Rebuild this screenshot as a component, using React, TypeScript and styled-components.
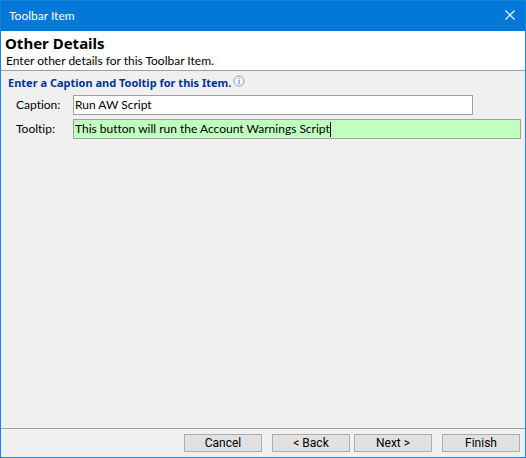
import React, { useState } from "react";
import styled, { createGlobalStyle } from "styled-components";

const GlobalStyle = createGlobalStyle`
  * { box-sizing: border-box; }
  body {
    margin: 0;
    font-family: Lato, "Open Sans", sans-serif;
    font-size: 12px;
    line-height: 16px;
    font-variant-ligatures: none;
    color: #000;
  }
`;

const Dialog = styled.main`
  display: flex;
  flex-direction: column;
  min-height: 100vh;
  background: #f0f0f0;
  border: 1px solid #1883d7;
`;

const TitleBar = styled.header`
  display: flex;
  align-items: center;
  justify-content: space-between;
  height: 30px;
  padding: 0 8px;
  background: #0078d7;
  color: #fff;
`;

const CloseButton = styled.button`
  display: flex;
  padding: 0 2px 2px;
  border: 0;
  background: transparent;
  color: inherit;
`;

const Intro = styled.section`
  height: 40px;
  padding: 3px 4px 0;
  background: #fff;
  border-bottom: 1px solid #a0a0a0;
`;

const Title = styled.h1`
  margin: 0;
  font-family: "Noto Sans", "Open Sans", sans-serif;
  font-size: 15px;
  line-height: 19px;
  font-weight: 700;
`;

const Description = styled.p`
  margin: 0 1px;
`;

const Form = styled.form`
  flex: 1;
  display: flex;
  flex-direction: column;
  gap: 4px;
  padding: 4px 4px 0 7px;
`;

const SectionTitle = styled.h2`
  display: flex;
  gap: 2px;
  margin: 0;
  font-family: "Noto Sans", "Open Sans", sans-serif;
  font-size: 11px;
  line-height: 16px;
  font-weight: 700;
  color: #003399;
`;

const Row = styled.div`
  display: grid;
  grid-template-columns: 57px 1fr;
  align-items: center;
  padding-left: 8px;
`;

const Field = styled.div<{ $active?: boolean }>`
  display: flex;
  align-items: center;
  height: 20px;
  margin-right: ${(p) => (p.$active ? "0" : "48px")};
  padding-left: 1px;
  overflow: hidden;
  border: 1px solid #a0a0a0;
  background: ${(p) => (p.$active ? "#c0ffc0" : "#fff")};
`;

const TextInput = styled.input<{ $fit?: boolean }>`
  ${(p) => (p.$fit ? "field-sizing: content;" : "flex: 1;")}
  min-width: 0;
  height: 16px;
  padding: 0;
  border: 0;
  outline: 0;
  background: transparent;
  color: inherit;
  font: inherit;
  font-variant-ligatures: none;
  caret-color: ${(p) => (p.$fit ? "transparent" : "#000")};
`;

const Caret = styled.span`
  width: 1px;
  height: 15px;
  background: #000;
`;

const Footer = styled.footer`
  display: flex;
  justify-content: flex-end;
  padding: 5px;
  border-top: 1px solid #a0a0a0;
`;

const ButtonGroup = styled.div`
  display: flex;
  gap: 4px;
  margin: 0 10px;
`;

const Button = styled.button`
  width: 78px;
  height: 18px;
  padding: 0;
  border: 1px solid #adadad;
  background: #e1e1e1;
  color: #000;
  font-family: Roboto, sans-serif;
  font-size: 12px;
  line-height: 16px;
`;

const InfoIcon = () => (
  <svg width="12" height="12" viewBox="0 0 12 12" aria-hidden="true">
    <circle cx="6" cy="6" r="5" fill="#f5f9ff" stroke="#7da2d6" />
    <path d="M6 3v1M6 5v4" stroke="#4679be" />
  </svg>
);

const CloseIcon = () => (
  <svg width="10" height="10" viewBox="0 0 10 10" aria-hidden="true">
    <path d="M.5.5l9 9M9.5.5l-9 9" stroke="currentColor" strokeWidth="1.2" />
  </svg>
);

export default function App() {
  const [caption, setCaption] = useState("Run AW Script");
  const [tooltip, setTooltip] = useState("This button will run the Account Warnings Script");

  return (
    <>
      <GlobalStyle />
      <Dialog>
        <TitleBar>
          <span>Toolbar Item</span>
          <CloseButton type="button" aria-label="Close"><CloseIcon /></CloseButton>
        </TitleBar>
        <Intro>
          <Title>Other Details</Title>
          <Description>Enter other details for this Toolbar Item.</Description>
        </Intro>
        <Form id="details" onSubmit={(e) => e.preventDefault()}>
          <SectionTitle>Enter a Caption and Tooltip for this Item.<InfoIcon /></SectionTitle>
          <Row>
            <label htmlFor="caption">Caption:</label>
            <Field>
              <TextInput id="caption" value={caption} onChange={(e) => setCaption(e.target.value)} />
            </Field>
          </Row>
          <Row>
            <label htmlFor="tooltip">Tooltip:</label>
            <Field $active>
              <TextInput id="tooltip" $fit value={tooltip} onChange={(e) => setTooltip(e.target.value)} />
              <Caret />
            </Field>
          </Row>
        </Form>
        <Footer>
          <Button type="button">Cancel</Button>
          <ButtonGroup>
            <Button type="button">&lt; Back</Button>
            <Button type="button">Next &gt;</Button>
          </ButtonGroup>
          <Button type="submit" form="details">Finish</Button>
        </Footer>
      </Dialog>
    </>
  );
}
